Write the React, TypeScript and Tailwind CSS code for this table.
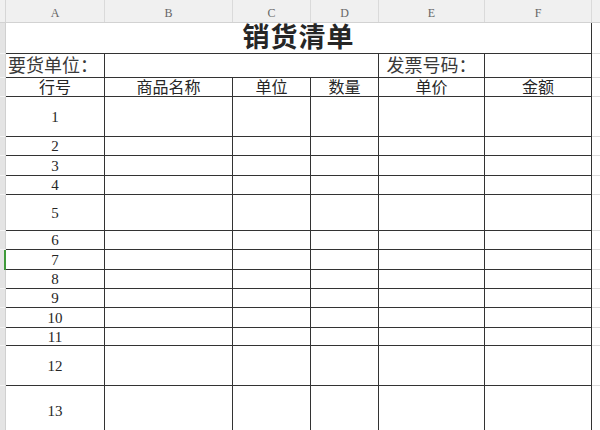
const font = { fontFamily: '"Liberation Serif", "Noto Sans CJK SC", serif' };

const letters = [
  { l: 'A', w: 'w-[99px]' },
  { l: 'B', w: 'w-[128px]' },
  { l: 'C', w: 'w-[78px]' },
  { l: 'D', w: 'w-[68px]' },
  { l: 'E', w: 'w-[106px]' },
  { l: 'F', w: 'w-[107px]' },
];

const heads = ['行号', '商品名称', '单位', '数量', '单价', '金额'];

const rows = [
  { n: 1, h: 'h-[40px]' },
  { n: 2, h: 'h-[19px]' },
  { n: 3, h: 'h-[20px]' },
  { n: 4, h: 'h-[19px]' },
  { n: 5, h: 'h-[36px]' },
  { n: 6, h: 'h-[19px]' },
  { n: 7, h: 'h-[20px]' },
  { n: 8, h: 'h-[19px]' },
  { n: 9, h: 'h-[19px]' },
  { n: 10, h: 'h-[20px]' },
  { n: 11, h: 'h-[18px]' },
  { n: 12, h: 'h-[40px]' },
  { n: 13, h: 'h-[50px]' },
];

// row header strip on the far left, mostly hidden
function Strip({ active }: { active?: boolean }) {
  return active ? (
    <div className="w-[6px] shrink-0 bg-[#e4e4e4] border-r-2 border-[#3f9a3a]" />
  ) : (
    <div className="w-[6px] shrink-0 bg-[#e4e4e4] border-r border-b border-[#d0d0d0] border-b-[#f4f4f4]" />
  );
}

export default function App() {
  return (
    <div className="w-[600px] h-[430px] overflow-hidden bg-white text-[#262626]" style={font}>
      {/* column letters */}
      <div className="flex h-[23px] bg-[#f0f0f0] border-b border-[#d2d2d2]">
        <div className="w-[6px] shrink-0 border-r border-[#d6d6d6]" />
        {letters.map((c) => (
          <div
            key={c.l}
            className={`${c.w} shrink-0 flex items-center justify-center pt-[3px] border-r border-[#dadada] text-[12px] text-[#666]`}
          >
            {c.l}
          </div>
        ))}
        <div className="flex-1" />
      </div>

      {/* title */}
      <div className="flex h-[31px]">
        <Strip />
        <div className="w-[586px] shrink-0 border-r border-b border-[#333] flex items-end justify-center pb-[1px]">
          <span className="text-[27px] font-bold leading-none tracking-[1px]">销货清单</span>
        </div>
        <div className="flex-1 border-b border-[#dcdcdc]" />
      </div>

      {/* 要货单位 / 发票号码 */}
      <div className="flex h-[24px] text-[18px] text-[#3a3a3a]">
        <Strip />
        <div className="w-[99px] shrink-0 border-r border-b border-[#333] flex items-end pl-[2px] leading-[22px]">
          要货单位：
        </div>
        <div className="w-[274px] shrink-0 border-r border-b border-[#333]" />
        <div className="w-[106px] shrink-0 border-r border-b border-[#333] flex items-end justify-center leading-[22px]">
          发票号码：
        </div>
        <div className="w-[107px] shrink-0 border-r border-b border-[#333]" />
        <div className="flex-1 border-b border-[#dcdcdc]" />
      </div>

      {/* table head */}
      <div className="flex h-[19px] text-[16px]">
        <Strip />
        {letters.map((c, i) => (
          <div
            key={c.l}
            className={`${c.w} shrink-0 border-r border-b border-[#333] flex items-end justify-center leading-[17px]`}
          >
            {heads[i]}
          </div>
        ))}
        <div className="flex-1 border-b border-[#dcdcdc]" />
      </div>

      {/* data rows */}
      {rows.map((r) => (
        <div key={r.n} className={`flex ${r.h}`}>
          <Strip active={r.n === 7} />
          {letters.map((c, i) => (
            <div
              key={c.l}
              className={`${c.w} shrink-0 border-r border-b border-[#333] flex items-center justify-center text-[15px] pt-[1px]`}
            >
              {i === 0 ? r.n : null}
            </div>
          ))}
          <div className="flex-1 border-b border-[#dcdcdc]" />
        </div>
      ))}
    </div>
  );
}
